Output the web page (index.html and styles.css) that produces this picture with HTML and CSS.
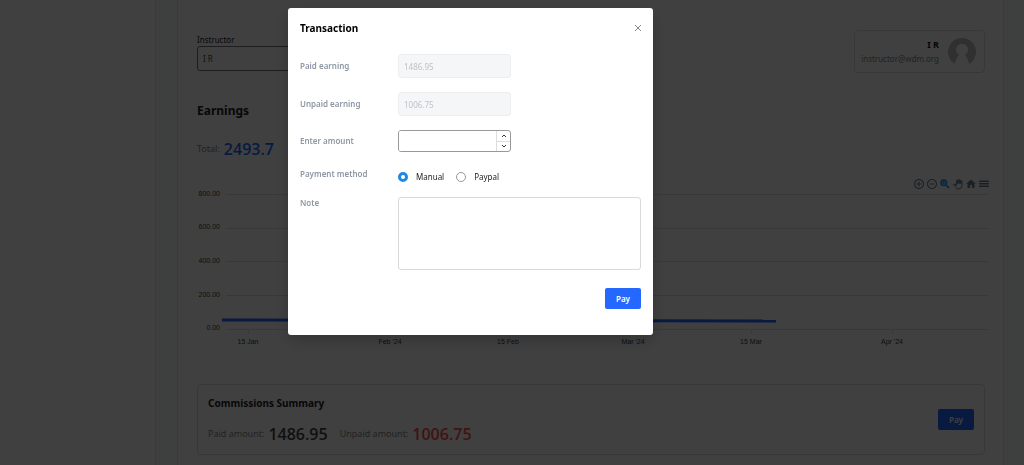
FILE: index.html
```html
<!DOCTYPE html>
<html lang="en">
<head>
  <meta charset="UTF-8" />
  <meta name="viewport" content="width=device-width, initial-scale=1.0"/>
  <title>Earnings</title>
  <link rel="stylesheet" href="styles.css">
</head>
<body>
  <div class="layout">
    <aside class="sidebar"></aside>

    <main class="content">
      <div class="top-row">
        <div class="field">
          <label for="instructor">Instructor</label>
          <select id="instructor">
            <option>I R</option>
          </select>
        </div>
        <div class="profile">
          <div class="profile-text">
            <strong>I R</strong>
            <span>instructor@wdm.org</span>
          </div>
          <svg class="avatar" viewBox="0 0 28 28">
            <path d="M7 26A14 14 0 1 1 21 26Q20 20 17 17A6 6 0 1 0 11 17Q8 20 7 26Z" fill="#bfbfbf"/>
          </svg>
        </div>
      </div>

      <h2>Earnings</h2>
      <p class="total"><span>Total:</span> <b class="blue">2493.7</b></p>

      <div class="toolbar">
        <button aria-label="Zoom in"><svg viewBox="0 0 24 24"><path d="M13 7h-2v4H7v2h4v4h2v-4h4v-2h-4V7zm-1-5C6.48 2 2 6.48 2 12s4.48 10 10 10 10-4.48 10-10S17.52 2 12 2zm0 18c-4.41 0-8-3.59-8-8s3.59-8 8-8 8 3.59 8 8-3.59 8-8 8z"/></svg></button>
        <button aria-label="Zoom out"><svg viewBox="0 0 24 24"><path d="M7 11v2h10v-2H7zm5-9C6.48 2 2 6.48 2 12s4.48 10 10 10 10-4.48 10-10S17.52 2 12 2zm0 18c-4.41 0-8-3.59-8-8s3.59-8 8-8 8 3.59 8 8-3.59 8-8 8z"/></svg></button>
        <button class="selected" aria-label="Selection zoom"><svg viewBox="0 0 24 24"><path d="M15.5 14h-.79l-.28-.27A6.47 6.47 0 0 0 16 9.5 6.5 6.5 0 1 0 9.5 16c1.61 0 3.09-.59 4.23-1.57l.27.28v.79l5 4.99L20.49 19l-4.99-5zm-6 0A4.5 4.5 0 1 1 14 9.5 4.5 4.5 0 0 1 9.5 14zM12 10h-2v2H9v-2H7V9h2V7h1v2h2v1z" stroke-width="1"/></svg></button>
        <button aria-label="Panning"><svg viewBox="0 0 24 24"><path d="M3 13l3-1 3 3V5h2v6h1V3h2v8h1V4h2v7h1V6h2v10q-1 6-7 6-4 0-6-4z" fill="none" stroke="#6e8192" stroke-width="2"/></svg></button>
        <button aria-label="Reset zoom"><svg viewBox="0 0 24 24"><path d="M10 20v-6h4v6h5v-8h3L12 3 2 12h3v8z"/></svg></button>
        <button aria-label="Menu"><svg viewBox="0 0 24 24"><path d="M2 18h20v-3H2v3zm0-5h20v-3H2v3zm0-8v3h20V5H2z"/></svg></button>
      </div>

      <svg class="chart" viewBox="0 0 788 162">
        <g class="grid-lines">
          <path d="M29 6.5H791M29 40.5H791M29 73.5H791M29 107.5H791M29 141.5H791"/>
          <path d="M51.5 142v4M193.5 142v4M311.5 142v4M436.5 142v4M554.5 142v4M695.5 142v4"/>
        </g>
        <path class="series" d="M25 132L579 133"/>
        <g class="y-labels">
          <text x="23" y="8">800.00</text>
          <text x="23" y="41">600.00</text>
          <text x="23" y="75">400.00</text>
          <text x="23" y="109">200.00</text>
          <text x="23" y="142">0.00</text>
        </g>
        <g class="x-labels">
          <text x="51" y="156">15 Jan</text>
          <text x="193" y="156">Feb '24</text>
          <text x="311" y="156">15 Feb</text>
          <text x="436" y="156">Mar '24</text>
          <text x="554" y="156">15 Mar</text>
          <text x="695" y="156">Apr '24</text>
        </g>
      </svg>

      <section class="summary">
        <div>
          <h3>Commissions Summary</h3>
          <div class="amounts">
            <p><span>Paid amount:</span> <b>1486.95</b></p>
            <p><span>Unpaid amount:</span> <b class="red">1006.75</b></p>
          </div>
        </div>
        <button class="pay">Pay</button>
      </section>
    </main>
  </div>

  <div class="overlay">
    <form class="modal" role="dialog" aria-labelledby="modal-title">
      <header>
        <h3 id="modal-title">Transaction</h3>
        <button type="button" class="close" aria-label="Close">
          <svg viewBox="0 0 8 8"><path d="M1 1L7 7M7 1L1 7"/></svg>
        </button>
      </header>

      <div class="row">
        <label for="paid">Paid earning</label>
        <input id="paid" type="text" value="1486.95" disabled>
      </div>
      <div class="row">
        <label for="unpaid">Unpaid earning</label>
        <input id="unpaid" type="text" value="1006.75" disabled>
      </div>
      <div class="row row-amount">
        <label for="amount">Enter amount</label>
        <div class="number">
          <input id="amount" type="number">
          <div class="steps">
            <button type="button" aria-label="Increase"><svg viewBox="0 0 6 4"><path d="M1 3L3 1L5 3"/></svg></button>
            <button type="button" aria-label="Decrease"><svg viewBox="0 0 6 4"><path d="M1 1L3 3L5 1"/></svg></button>
          </div>
        </div>
      </div>
      <div class="row row-method">
        <span class="row-label" id="method">Payment method</span>
        <div class="radios" role="radiogroup" aria-labelledby="method">
          <label><input type="radio" name="method" checked> Manual</label>
          <label><input type="radio" name="method"> Paypal</label>
        </div>
      </div>
      <div class="row row-note">
        <label for="note">Note</label>
        <textarea id="note"></textarea>
      </div>

      <footer>
        <button type="button" class="pay">Pay</button>
      </footer>
    </form>
  </div>
</body>
</html>
```
FILE: styles.css
```css
* {
  box-sizing: border-box;
}

body {
  margin: 0;
  height: 100vh;
  overflow: hidden;
  background: #f7fffc;
  color: #222;
  font-family: "Noto Sans", "Open Sans", sans-serif;
  font-size: 8px;
  line-height: 12px;
}

h2, h3, p {
  margin: 0;
}

button, input, select, textarea {
  font: inherit;
}

button {
  padding: 0;
  border: none;
  background: none;
  cursor: pointer;
}

svg {
  display: block;
}

.layout {
  display: flex;
  gap: 21px;
  min-height: 100vh;
  padding-right: 20px;
}

.sidebar {
  width: 156px;
  background: #fff;
  border-right: 1px solid #e8e8e8;
}

.content {
  flex: 1;
  padding: 30px 18px 0 19px;
  background: #fff;
  border: solid #e8e8e8;
  border-width: 0 1px;
}

.top-row {
  display: flex;
  justify-content: space-between;
}

.field {
  display: flex;
  flex-direction: column;
  width: 200px;
  padding-top: 4px;
}

.field select {
  height: 25px;
  padding: 0 5px;
  appearance: none;
  background: #fff;
  border: 1px solid #777;
  border-radius: 3px;
  color: #444;
}

.profile {
  display: flex;
  align-items: center;
  gap: 9px;
  height: 43px;
  padding: 0 8px 0 6px;
  border: 1px solid #e0e0e0;
  border-radius: 4px;
}

.profile-text {
  display: flex;
  flex-direction: column;
  gap: 2px;
  text-align: right;
  color: #888;
}

.profile-text strong {
  font-size: 9px;
  color: #111;
}

.avatar {
  width: 28px;
  height: 28px;
}

h2 {
  margin-top: 29px;
  font-size: 12px;
  line-height: 18px;
}

.total {
  display: flex;
  align-items: center;
  gap: 4px;
  height: 24px;
  margin-top: 17px;
}

.total span,
.amounts span {
  font-size: 9px;
  color: #888;
}

.total b,
.amounts b {
  font-family: "Open Sans", sans-serif;
  font-size: 16px;
  font-weight: 600;
}

.total .blue {
  color: #2468ff;
}

.amounts .red {
  color: #ff4d4f;
}

.toolbar {
  display: flex;
  justify-content: flex-end;
  gap: 1px;
  margin-top: 17px;
  margin-right: -5px;
}

.toolbar svg {
  width: 12px;
  height: 12px;
  fill: #6e8192;
}

.toolbar .selected svg {
  fill: #008ffb;
  stroke: #008ffb;
}

.chart {
  width: 100%;
  margin-top: -2px;
  overflow: visible;
  font-family: "Liberation Sans", Arial, sans-serif;
  font-size: 7px;
  fill: #373d3f;
}

.grid-lines {
  stroke: #e0e0e0;
  fill: none;
}

.series {
  stroke: #2468ff;
  stroke-width: 3;
}

.y-labels {
  text-anchor: end;
}

.x-labels {
  text-anchor: middle;
}

.summary {
  display: flex;
  justify-content: space-between;
  align-items: center;
  height: 71px;
  margin-top: 34px;
  padding: 0 10px;
  border: 1px solid #e0e0e0;
  border-radius: 4px;
}

h3 {
  font-size: 10px;
  line-height: 16px;
}

.amounts {
  display: flex;
  gap: 12px;
  margin-top: 13px;
}

.amounts p {
  display: flex;
  align-items: center;
  gap: 4px;
  height: 20px;
}

.amounts b {
  color: #444;
}

.pay {
  width: 36px;
  height: 21px;
  background: #2468ff;
  border-radius: 2px;
  color: #fff;
  font-weight: 600;
}

.overlay {
  position: fixed;
  inset: 0;
  display: flex;
  justify-content: center;
  align-items: flex-start;
  padding: 8px 83px 8px 0;
  background: rgba(0, 0, 0, 0.75);
}

.modal {
  width: 365px;
  padding: 12px 12px 26px;
  background: #fff;
  border-radius: 3px;
  box-shadow: 0 6px 16px rgba(0, 0, 0, 0.2);
}

.modal header {
  display: flex;
  justify-content: space-between;
  align-items: center;
  margin-bottom: 18px;
}

.modal h3 {
  color: #000;
}

.close svg {
  width: 8px;
  height: 8px;
  margin-right: -1px;
  stroke: #888;
  fill: none;
}

.row {
  display: grid;
  grid-template-columns: 98px 1fr;
  align-items: center;
  margin-bottom: 14px;
}

.row > label,
.row-label {
  font-weight: 600;
  color: #8d97a3;
}

.row input[type="text"] {
  width: 113px;
  height: 24px;
  padding: 0 5px;
  background: #f5f6f8;
  border: 1px solid #eceef0;
  border-radius: 3px;
  color: #bfc2c6;
}

.row-amount {
  margin-bottom: 16px;
}

.number {
  display: flex;
  width: 113px;
  height: 22px;
  border: 1px solid #999;
  border-radius: 3px;
  overflow: hidden;
}

.number input {
  flex: 1;
  min-width: 0;
  padding: 0 5px;
  border: none;
  appearance: textfield;
}

.number input::-webkit-inner-spin-button {
  appearance: none;
}

.steps {
  display: flex;
  flex-direction: column;
  width: 14px;
  border-left: 1px solid #ddd;
}

.steps button {
  flex: 1;
  display: flex;
  justify-content: center;
  align-items: center;
}

.steps button + button {
  border-top: 1px solid #ddd;
}

.steps svg {
  width: 6px;
  height: 4px;
  stroke: #333;
  fill: none;
}

.row-method,
.row-note {
  align-items: start;
}

.radios {
  display: flex;
  gap: 12px;
  padding-top: 3px;
}

.radios label {
  display: flex;
  align-items: center;
  gap: 8px;
}

.radios input {
  appearance: none;
  width: 10px;
  height: 10px;
  margin: 0;
  border: 1px solid #999;
  border-radius: 50%;
}

.radios input:checked {
  border: 3px solid #1e88e5;
}

textarea {
  width: 100%;
  height: 73px;
  padding: 5px;
  border: 1px solid #d9d9d9;
  border-radius: 3px;
  resize: none;
}

.row-note {
  margin-bottom: 18px;
}

.modal footer {
  display: flex;
  justify-content: flex-end;
}
```
